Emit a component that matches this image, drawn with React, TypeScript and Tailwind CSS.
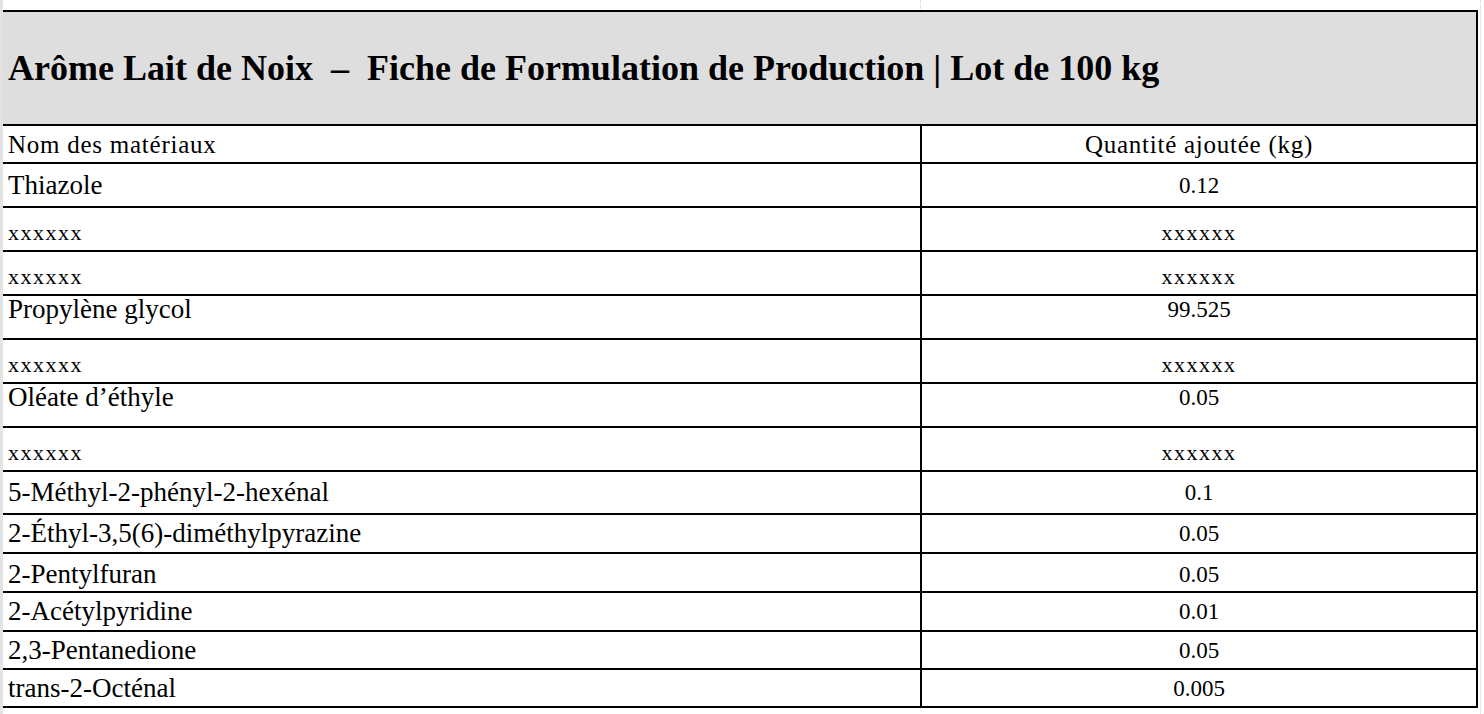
import React from 'react'

type Row = {
  name: string
  qty: string
  masked?: boolean
  h: string
  shift?: string
}

const rows: Row[] = [
  { name: 'Thiazole', qty: '0.12', h: 'h-[44px]' },
  { name: 'xxxxxx', qty: 'xxxxxx', masked: true, h: 'h-[44px]', shift: 'pt-[8px]' },
  { name: 'xxxxxx', qty: 'xxxxxx', masked: true, h: 'h-[44px]', shift: 'pt-[8px]' },
  { name: 'Propylène glycol', qty: '99.525', h: 'h-[44px]', shift: 'pb-[16px]' },
  { name: 'xxxxxx', qty: 'xxxxxx', masked: true, h: 'h-[44px]', shift: 'pt-[8px]' },
  { name: 'Oléate d’éthyle', qty: '0.05', h: 'h-[44px]', shift: 'pb-[16px]' },
  { name: 'xxxxxx', qty: 'xxxxxx', masked: true, h: 'h-[44px]', shift: 'pt-[8px]' },
  { name: '5-Méthyl-2-phényl-2-hexénal', qty: '0.1', h: 'h-[43px]' },
  { name: '2-Éthyl-3,5(6)-diméthylpyrazine', qty: '0.05', h: 'h-[39px]' },
  { name: '2-Pentylfuran', qty: '0.05', h: 'h-[39px]', shift: 'pt-[3px]' },
  { name: '2-Acétylpyridine', qty: '0.01', h: 'h-[39px]' },
  { name: '2,3-Pentanedione', qty: '0.05', h: 'h-[38px]' },
  { name: 'trans-2-Octénal', qty: '0.005', h: 'h-[38px]' },
]

function DataRow({ row }: { row: Row }) {
  const text = row.masked
    ? 'text-[22px] tracking-[1.5px]'
    : 'text-[27px]'
  const num = row.masked ? 'text-[22px] tracking-[1.5px]' : 'text-[23px]'
  return (
    <div className={`flex border-b-2 border-black ${row.h}`}>
      <div className={`flex w-[919px] items-center border-r-2 border-black pl-[5px] leading-none ${text} ${row.shift ?? ''}`}>
        {row.name}
      </div>
      <div className={`flex flex-1 items-center justify-center leading-none ${num} ${row.shift ?? ''}`}>
        {row.qty}
      </div>
    </div>
  )
}

export default function App() {
  return (
    <div className="flex h-[714px] w-[1484px] overflow-hidden bg-white font-['Liberation_Serif',serif] text-black">
      <div className="w-[3px] bg-[#e2e2e2]" />
      <div className="flex w-[1475px] flex-col">
        {/* spreadsheet gap above the sheet */}
        <div className="flex h-[10px]">
          <div className="w-[918px] border-r border-dotted border-[#d6d6d6]" />
        </div>
        <div className="flex flex-col border-t-2 border-r-2 border-black">
          <div className="flex h-[114px] items-center border-b-2 border-black bg-[#dedede] pl-[5px] text-[36px] font-bold leading-none">
            Arôme Lait de Noix &nbsp;–&nbsp; Fiche de Formulation de Production | Lot de 100 kg
          </div>
          <div className="flex h-[38px] border-b-2 border-black text-[25px] leading-none tracking-[0.03em]">
            <div className="flex w-[919px] items-center border-r-2 border-black pl-[5px]">
              Nom des matériaux
            </div>
            <div className="flex flex-1 items-center justify-center">
              Quantité ajoutée (kg)
            </div>
          </div>
          {rows.map((r, i) => (
            <DataRow key={i} row={r} />
          ))}
        </div>
      </div>
      <div className="ml-[2px] h-full border-l border-dotted border-[#d6d6d6]" />
    </div>
  )
}
